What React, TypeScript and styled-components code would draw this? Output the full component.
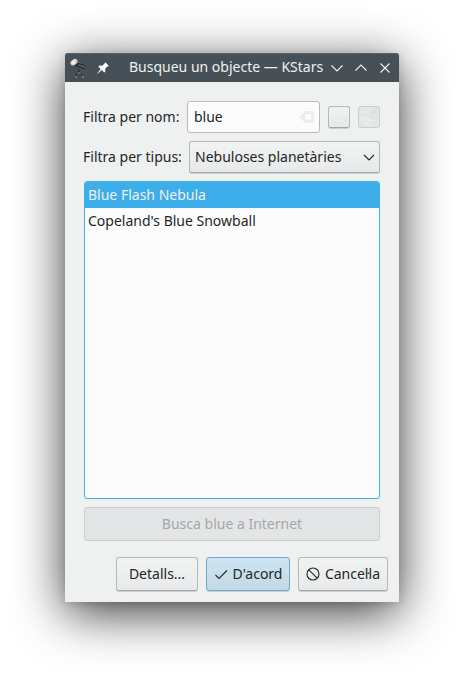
import React from "react";
import styled, { createGlobalStyle, css } from "styled-components";

const Global = createGlobalStyle`
  * { box-sizing: border-box; }
  body {
    margin: 0;
    background: #fff;
    color: #232629;
    font: 14px/20px "Noto Sans", sans-serif;
  }
`;

const Desktop = styled.div`
  height: 679px;
  padding: 53px 65px 77px;
  overflow: hidden;
`;

const Window = styled.div`
  width: 334px;
  height: 549px;
  display: flex;
  flex-direction: column;
  background: #eff0f0;
  border-radius: 3px 3px 0 0;
  box-shadow: 0 11px 50px rgba(0, 0, 0, 0.78), 0 2px 8px rgba(0, 0, 0, 0.12);
`;

const TitleBar = styled.header`
  height: 29px;
  flex: none;
  display: flex;
  align-items: center;
  padding: 0 5px;
  color: #eff0f1;
  background: #475057;
  border-radius: 3px 3px 0 0;
  box-shadow: inset 0 1px #596269;
  svg { display: block; flex: none; }
`;

const Pin = styled.svg`
  margin-left: 7px;
`;

const Title = styled.h1`
  margin: 0 0 1px 18px;
  width: 200px;
  font-size: 14px;
  font-weight: 400;
  white-space: nowrap;
`;

const WindowControls = styled.div`
  display: flex;
  gap: 8px;
`;

const Content = styled.main`
  flex: 1;
  display: flex;
  flex-direction: column;
  padding: 19px 19px 0 18px;
`;

const FilterRow = styled.div<{ $gap: number }>`
  height: 32px;
  margin-bottom: 8px;
  display: flex;
  align-items: center;
  gap: ${(p) => p.$gap}px;
`;

const FilterLabel = styled.label<{ $width: number }>`
  width: ${(p) => p.$width}px;
  flex: none;
  white-space: nowrap;
`;

const SearchField = styled.div`
  width: 133px;
  height: 32px;
  display: flex;
  align-items: center;
  justify-content: space-between;
  padding: 0 4px 0 6px;
  background: #fcfcfc;
  border: 1px solid #b9bbbc;
  border-radius: 3px;
`;

const raised = css`
  border: 1px solid #b5b7b8;
  border-bottom-color: #a5a7a8;
  border-radius: 3px;
  background: linear-gradient(#f1f2f2, #e8e9ea);
  box-shadow: 0 1px rgba(0, 0, 0, 0.14);
`;

const flat = css`
  border: 1px solid #cbcdce;
  border-radius: 3px;
  background: #e3e5e6;
`;

const ToolButton = styled.button<{ $inactive?: boolean }>`
  ${(p) => (p.$inactive ? flat : raised)}
  width: 22px;
  height: 22px;
  flex: none;
  padding: 0;
  display: grid;
  place-items: center;
`;

const Combo = styled.div`
  ${raised}
  width: 191px;
  height: 32px;
  padding: 0 4px 0 5px;
  display: flex;
  align-items: center;
  justify-content: space-between;
`;

const ResultList = styled.ul`
  margin: 0 0 8px 1px;
  padding: 0;
  height: 318px;
  list-style: none;
  overflow: hidden;
  background: #fcfcfc;
  border: 1px solid #3daee9;
  border-radius: 3px;
`;

const Result = styled.li<{ $selected?: boolean }>`
  height: 26px;
  padding: 0 3px;
  line-height: 26px;
  ${(p) => p.$selected && css`
    color: #eff0f1;
    background: #3daee9;
  `}
`;

const pushButton = css`
  height: 34px;
  padding: 0;
  display: flex;
  align-items: center;
  justify-content: center;
  font: inherit;
  color: inherit;
  white-space: nowrap;
`;

const OnlineButton = styled.button`
  ${pushButton}
  ${flat}
  margin-left: 1px;
  color: #a5a7a9;
`;

const Actions = styled.footer`
  display: flex;
  justify-content: flex-end;
  gap: 8px;
  margin: 16px -8px 0 0;
`;

const ActionButton = styled.button<{ $width: number; $primary?: boolean }>`
  ${pushButton}
  ${raised}
  width: ${(p) => p.$width}px;
  gap: 4px;
  &:has(svg) { padding-right: 1px; }
  ${(p) => p.$primary && css`
    border-color: #6cabcf;
    background: linear-gradient(#cce4f2, #c3d9e6);
  `}
`;

const Telescope = () => (
  <svg width="18" height="20" viewBox="0 0 18 20">
    <path d="M5 1.5 15.8 8.2 14.8 11.5 3 7.5Z" fill="#302e30" />
    <path d="M6.5 3 11 5.3M8 6.8l5 2" stroke="#77716e" />
    <path d="m12.5 7.5 2.5 2.5" stroke="#99705c" />
    <ellipse cx="4" cy="4.2" rx="3.8" ry="2.8" transform="rotate(-35 4 4.2)" fill="#cfd0d0" />
    <ellipse cx="3.4" cy="4.4" rx="2.2" ry="1.8" transform="rotate(-35 3.4 4.4)" fill="#ededed" />
    <path d="M9 11.5v3M8.5 13.5 5.5 18M9 13.5l3.5 4.5M9 14v3" stroke="#24272b" />
    <path d="M5 19h2M12 19h2M7.5 15h3" stroke="#9ba0a3" />
  </svg>
);

const chevron = (up: boolean) => (up ? "M2.5 10.5 8 5l5.5 5.5" : "M2.5 5.5 8 11l5.5-5.5");

const Glyph = ({ d, width = 1.1 }: { d: string; width?: number }) => (
  <svg width="16" height="16" viewBox="0 0 16 16" fill="none" stroke="currentColor" strokeWidth={width}>
    <path d={d} />
  </svg>
);

export default function App() {
  return (
    <>
      <Global />
      <Desktop lang="ca">
        <Window>
          <TitleBar>
            <Telescope />
            <Pin width="16" height="16" viewBox="0 0 16 16" fill="#fcfcfc">
              <path d="m10.4 2.4 3.5 3.4-1 .7-.6-.1-2.1 2.4.1 2.6-1 1-2.5-2.5-4.4 3.8-.3-.3L5.7 9 3.3 6.5l1-.9 2.8.1 2.6-2.1-.1-.5Z" />
            </Pin>
            <Title>Busqueu un objecte — KStars</Title>
            <WindowControls>
              <Glyph d={chevron(false)} />
              <Glyph d={chevron(true)} />
              <Glyph d="m3.5 3.5 9 9m0-9-9 9" />
            </WindowControls>
          </TitleBar>
          <Content>
            <FilterRow $gap={8}>
              <FilterLabel $width={96}>Filtra per nom:</FilterLabel>
              <SearchField>
                <span>blue</span>
                <svg width="16" height="16" viewBox="0 0 16 16">
                  <path d="M6 2h9v12H6L0 8Z" fill="#eceeee" />
                  <path d="m7 5.5 5 5m0-5-5 5" stroke="#fff" strokeWidth="2" />
                </svg>
              </SearchField>
              <ToolButton>
                <svg width="18" height="18" viewBox="0 0 18 18" fill="none" stroke="#e5e7e7">
                  <path d="M1 10.5h16M2 11c2 5.5 12 5.5 14 0" />
                </svg>
              </ToolButton>
              <ToolButton $inactive>
                <svg width="20" height="20" viewBox="0 0 20 20" fill="none" stroke="#eff0f1">
                  <path d="m18.5 1-5 6.5M10 7.5l6 4.5" stroke="#d4d6d8" />
                  <path d="M10.5 8C8 11 5 11 2 10.5c0 4 3 7.5 8 8 3-1 4.5-3.500 5-6.500M4 13l4.500-1.500 4.500 3M6 16l4-2" />
                  <path d="M2 5.500h3M3.500 4v3M7 4.500h2M8 3.500v2M6.500 8h1" />
                </svg>
              </ToolButton>
            </FilterRow>
            <FilterRow $gap={7}>
              <FilterLabel $width={99}>Filtra per tipus:</FilterLabel>
              <Combo>
                <span>Nebuloses planetàries</span>
                <svg width="12" height="12" viewBox="0 0 12 12" fill="none" stroke="currentColor" strokeWidth="1.1">
                  <path d="m1 4 5 5 5-5" />
                </svg>
              </Combo>
            </FilterRow>
            <ResultList>
              <Result $selected>Blue Flash Nebula</Result>
              <Result>Copeland's Blue Snowball</Result>
            </ResultList>
            <OnlineButton disabled>Busca blue a Internet</OnlineButton>
            <Actions>
              <ActionButton $width={82}>Detalls...</ActionButton>
              <ActionButton $width={84} $primary>
                <Glyph d="m2.500 9 3.500 3.500 8-8" />
                D'acord
              </ActionButton>
              <ActionButton $width={90}>
                <Glyph d="M14 8A6 6 0 1 1 2 8a6 6 0 1 1 12 0ZM3.8 3.8l8.4 8.4" />
                Cancel·la
              </ActionButton>
            </Actions>
          </Content>
        </Window>
      </Desktop>
    </>
  );
}
